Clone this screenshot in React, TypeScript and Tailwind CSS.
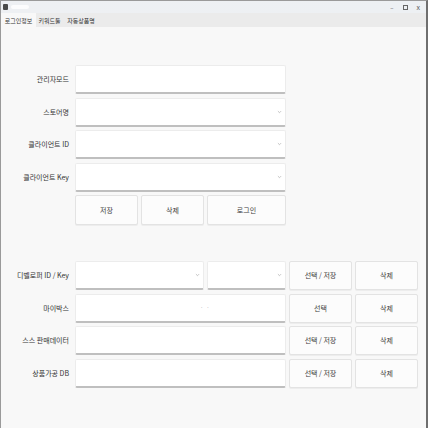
import React from "react"

const FONT = { fontFamily: '"Noto Sans CJK KR", "Noto Sans", sans-serif' }

function Chevron() {
  return (
    <svg width="5" height="4" viewBox="0 0 5 4" className="shrink-0">
      <path d="M0.9 1.1 L2.5 2.7 L4.1 1.1" fill="none" stroke="#a0a0a0" strokeWidth="0.6" />
    </svg>
  )
}

function Field({ combo, className = "", children }: { combo?: boolean; className?: string; children?: React.ReactNode }) {
  return (
    <div
      className={`h-[29px] bg-white border border-[#ececec] border-b-2 border-b-[#bfbfbf] rounded-[2px] flex items-center justify-end pr-[3px] ${className}`}
    >
      {children}
      {combo && <Chevron />}
    </div>
  )
}

function Btn({ label, className = "" }: { label: string; className?: string }) {
  return (
    <button className={`h-[29px] bg-[#fcfcfc] border border-[#e3e3e3] rounded-[2px] text-[7px] text-[#3c3c3c] shadow-[0_1px_0_#ededed] ${className}`}>
      {label}
    </button>
  )
}

function Label({ text }: { text: string }) {
  return <div className="w-[68px] shrink-0 text-right text-[7px] text-[#333]">{text}</div>
}

export default function App() {
  return (
    <div style={FONT} className="w-[428px] h-[428px] bg-[#f8f8f8] flex flex-col border-l border-[#9a9a9a] border-r-2 border-r-[#6f6f6f] border-t border-t-[#9a9a9a] overflow-hidden">
      {/* title bar */}
      <div className="h-[12px] shrink-0 bg-gradient-to-r from-[#eef0f3] to-[#edf0f3] flex items-center px-[2px]">
        <div className="w-[5px] h-[6px] bg-[#4a4a4a] rounded-[1px]" />
        <div className="ml-[3px] w-[18px] h-[4px] bg-white/80 rounded-sm" />
        <div className="ml-auto flex items-center gap-[9px] pr-[4px] text-[6px] text-[#555]">
          <span>–</span>
          <span className="w-[5px] h-[5px] border border-[#666]" />
          <span className="text-[7px]">x</span>
        </div>
      </div>

      {/* tabs */}
      <div className="h-[14px] shrink-0 bg-[#ebebeb] flex items-end text-[6px] text-[#333]">
        <div className="h-[14px] w-[35px] bg-[#f8f8f8] flex items-center justify-center">로그인정보</div>
        <div className="h-[14px] w-[27px] flex items-center justify-center">키워드툴</div>
        <div className="h-[14px] w-[36px] flex items-center justify-center">자동상품명</div>
      </div>

      {/* content */}
      <div className="flex flex-col pt-[38px]">
        <div className="flex flex-col gap-[3.5px]">
          <div className="flex items-center gap-[6px]">
            <Label text="관리자모드" />
            <Field className="w-[211px]" />
          </div>
          <div className="flex items-center gap-[6px]">
            <Label text="스토어명" />
            <Field className="w-[211px]" combo />
          </div>
          <div className="flex items-center gap-[6px]">
            <Label text="클라이언트 ID" />
            <Field className="w-[211px]" combo />
          </div>
          <div className="flex items-center gap-[6px]">
            <Label text="클라이언트 Key" />
            <Field className="w-[211px]" combo />
          </div>
          <div className="flex items-center gap-[6px]">
            <div className="w-[68px] shrink-0" />
            <div className="flex gap-[3px] w-[211px]">
              <Btn label="저장" className="w-[63px] h-[30px]" />
              <Btn label="삭제" className="w-[63px] h-[30px]" />
              <Btn label="로그인" className="flex-1 h-[30px]" />
            </div>
          </div>
        </div>

        <div className="flex flex-col gap-[3.5px] mt-[36px]">
          <div className="flex items-center gap-[6px]">
            <Label text="디벨로퍼 ID / Key" />
            <div className="flex gap-[3px] w-[211px]">
              <Field className="w-[129px]" combo />
              <Field className="flex-1" combo />
            </div>
            <div className="flex gap-[3px] -ml-[3px]">
              <Btn label="선택 / 저장" className="w-[63px]" />
              <Btn label="삭제" className="w-[63px]" />
            </div>
          </div>
          <div className="flex items-center gap-[6px]">
            <Label text="마이박스" />
            <Field className="w-[211px] justify-start">
              <span className="ml-[124px] mr-auto text-[6px] text-[#a8a8a8] tracking-[3px]">··</span>
            </Field>
            <div className="flex gap-[3px] -ml-[3px]">
              <Btn label="선택" className="w-[63px]" />
              <Btn label="삭제" className="w-[63px]" />
            </div>
          </div>
          <div className="flex items-center gap-[6px]">
            <Label text="스스 판매데이터" />
            <Field className="w-[211px]" />
            <div className="flex gap-[3px] -ml-[3px]">
              <Btn label="선택 / 저장" className="w-[63px]" />
              <Btn label="삭제" className="w-[63px]" />
            </div>
          </div>
          <div className="flex items-center gap-[6px]">
            <Label text="상품가공 DB" />
            <Field className="w-[211px]" />
            <div className="flex gap-[3px] -ml-[3px]">
              <Btn label="선택 / 저장" className="w-[63px]" />
              <Btn label="삭제" className="w-[63px]" />
            </div>
          </div>
        </div>
      </div>
    </div>
  )
}
